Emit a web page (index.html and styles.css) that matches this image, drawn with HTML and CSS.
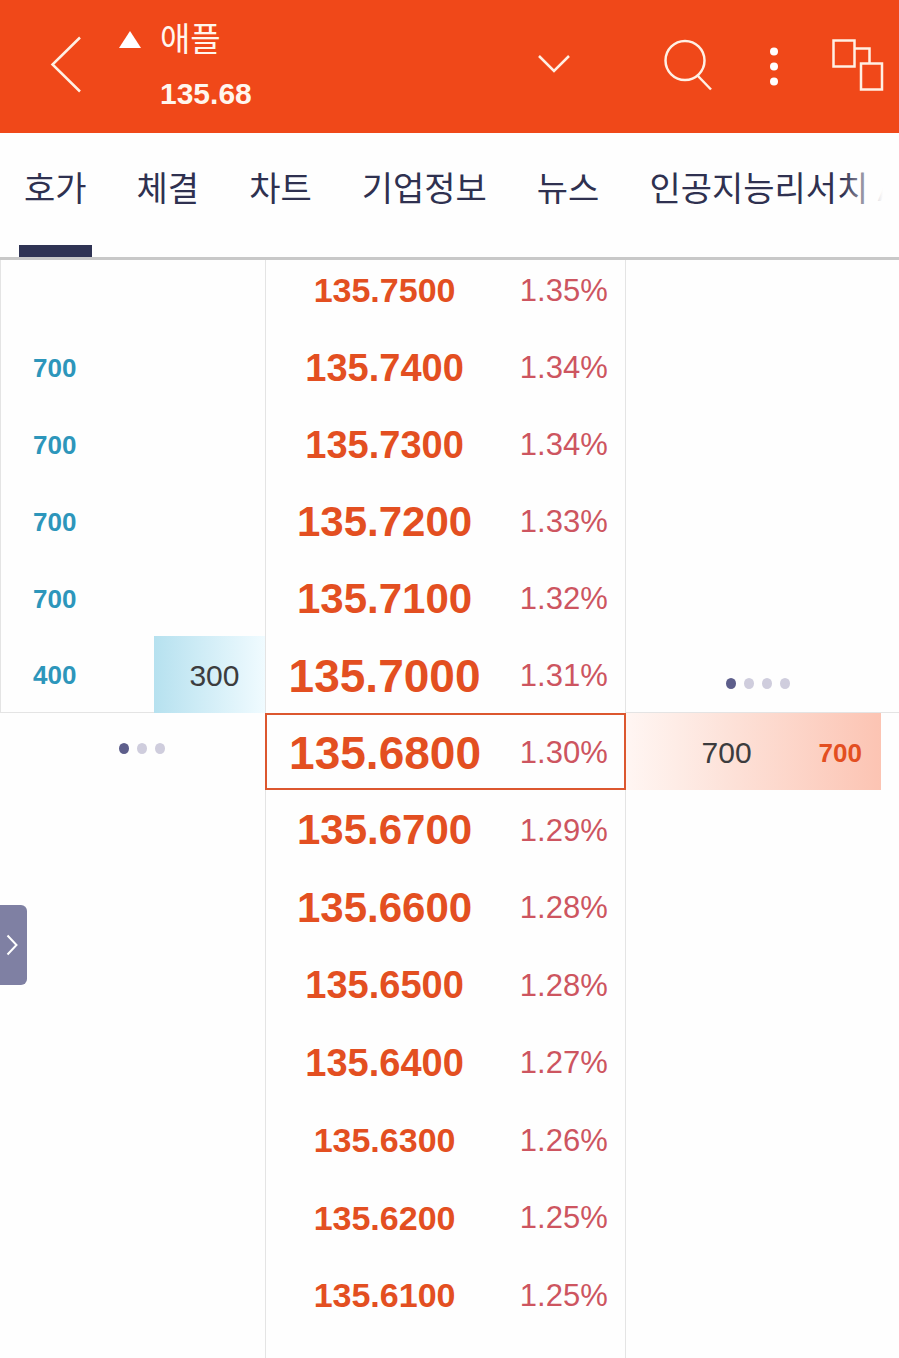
FILE: index.html
```html
<!DOCTYPE html>
<html lang="ko">
<head>
<meta charset="utf-8">
<meta name="viewport" content="width=device-width, initial-scale=1">
<title>애플 호가</title>
<link rel="stylesheet" href="styles.css">
</head>
<body>
<header class="topbar">
  <button class="icon-btn" type="button" aria-label="뒤로">
    <svg width="32" height="58" viewBox="0 0 32 58"><path d="M30 1.500 2.500 28.500 30 55.500"/></svg>
  </button>
  <div class="stock">
    <svg class="up" width="22" height="17" viewBox="0 0 22 17" aria-hidden="true"><path d="M11 0 22 17H0z"/></svg>
    <h1 class="stock-name">애플</h1>
    <p class="stock-price">135.68</p>
  </div>
  <div class="actions">
    <button class="icon-btn open-list" type="button" aria-label="종목 목록">
      <svg width="34" height="20" viewBox="0 0 34 20"><path d="M2 1 17 16 32 1"/></svg>
    </button>
    <button class="icon-btn search" type="button" aria-label="검색">
      <svg width="50" height="52" viewBox="0 0 50 52"><circle cx="22" cy="21.500" r="19.500"/><path d="M34 36 48 50.500"/></svg>
    </button>
    <button class="icon-btn more" type="button" aria-label="더보기">
      <svg width="10" height="40" viewBox="0 0 10 40"><g class="solid"><circle cx="5" cy="4.500" r="4"/><circle cx="5" cy="19.500" r="4"/><circle cx="5" cy="34.500" r="4"/></g></svg>
    </button>
    <button class="icon-btn" type="button" aria-label="화면 연결">
      <svg width="52" height="52" viewBox="0 0 52 52"><path d="M1.500 1.500h21v26h-21zM29 24.500h21v26h-21zM22.500 9.500H37.500v15"/></svg>
    </button>
  </div>
</header>
<nav class="tabs">
  <a class="tab active" href="#quote" aria-current="page">호가</a>
  <a class="tab" href="#trades">체결</a>
  <a class="tab" href="#chart">차트</a>
  <a class="tab" href="#company">기업정보</a>
  <a class="tab" href="#news">뉴스</a>
  <a class="tab" href="#research">인공지능리서치 A</a>
</nav>
<main class="book" id="quote">
  <table class="quotes" aria-label="호가">
    <colgroup><col class="c-total"><col class="c-change"><col class="c-price"><col class="c-rate"><col class="c-bid"></colgroup>
    <tbody class="asks">
      <tr><td class="total"></td><td></td><td class="price s1">135.7500</td><td class="rate">1.35%</td><td></td></tr>
      <tr><td class="total">700</td><td></td><td class="price s2">135.7400</td><td class="rate">1.34%</td><td></td></tr>
      <tr><td class="total">700</td><td></td><td class="price s2">135.7300</td><td class="rate">1.34%</td><td></td></tr>
      <tr><td class="total">700</td><td></td><td class="price s3">135.7200</td><td class="rate">1.33%</td><td></td></tr>
      <tr><td class="total">700</td><td></td><td class="price s3">135.7100</td><td class="rate">1.32%</td><td></td></tr>
      <tr><td class="total">400</td><td class="ask-bar">300</td><td class="price s4">135.7000</td><td class="rate">1.31%</td>
        <td class="pager-right"><div class="dots"><i class="on"></i><i></i><i></i><i></i></div></td></tr>
    </tbody>
    <tbody class="bids">
      <tr class="current"><td class="pager-left" colspan="2"><div class="dots"><i class="on"></i><i></i><i></i></div></td><td class="price s4">135.6800</td><td class="rate">1.30%</td>
        <td class="bid"><div class="bid-bar"><span class="qty">700</span><b class="sum">700</b></div></td></tr>
      <tr><td colspan="2"></td><td class="price s3">135.6700</td><td class="rate">1.29%</td><td></td></tr>
      <tr><td colspan="2"></td><td class="price s3">135.6600</td><td class="rate">1.28%</td><td></td></tr>
      <tr><td colspan="2"></td><td class="price s2">135.6500</td><td class="rate">1.28%</td><td></td></tr>
      <tr><td colspan="2"></td><td class="price s2">135.6400</td><td class="rate">1.27%</td><td></td></tr>
      <tr><td colspan="2"></td><td class="price s1">135.6300</td><td class="rate">1.26%</td><td></td></tr>
      <tr><td colspan="2"></td><td class="price s1">135.6200</td><td class="rate">1.25%</td><td></td></tr>
      <tr><td colspan="2"></td><td class="price s1">135.6100</td><td class="rate">1.25%</td><td></td></tr>
      <tr><td colspan="2"></td><td class="price"></td><td class="rate"></td><td></td></tr>
    </tbody>
  </table>
</main>
<button class="drawer" type="button" aria-label="패널 열기">
  <svg width="12" height="22" viewBox="0 0 12 22"><path d="M1.500 1.500 10.500 11 1.500 20.500"/></svg>
</button>
</body>
</html>
```
FILE: styles.css
```css
* { box-sizing: border-box; }

body {
  margin: 0;
  height: 100vh;
  display: flex;
  flex-direction: column;
  overflow: hidden;
  background: #fefefe;
  font-family: "Liberation Sans", "Noto Sans CJK KR", sans-serif;
  color: #3c3c3e;
}

button {
  border: 0;
  padding: 0;
  background: none;
  cursor: pointer;
}

svg {
  display: block;
  fill: none;
  stroke: #fff0e4;
  stroke-width: 2.5;
}

/* Header */
.topbar {
  flex: none;
  display: flex;
  align-items: center;
  height: 133px;
  padding: 0 15px 4px 50px;
  background: #f04819;
  color: #fff6ee;
}

.stock {
  display: grid;
  grid-template-columns: 22px auto;
  column-gap: 19px;
  row-gap: 6px;
  align-items: center;
  margin-left: 37px;
  padding-top: 4px;
}

.up { fill: #fff; stroke: none; }

.stock-name,
.stock-price {
  margin: 0;
  line-height: 48px;
}

.stock-name {
  font-size: 33px;
  font-weight: 400;
}

.stock-price {
  grid-column: 2;
  font-size: 30px;
  font-weight: 700;
}

.actions {
  display: flex;
  align-items: center;
  margin-left: auto;
}

.open-list { margin-right: 92px; }
.search { margin-right: 56px; }
.more { margin-right: 53px; }
.more svg { margin-top: 4px; }
.solid { fill: #fff; stroke: none; }

/* Tabs */
.tabs {
  flex: none;
  display: flex;
  gap: 40px;
  height: 127px;
  padding-left: 19px;
  border-bottom: 3px solid #c8c8c8;
  overflow: hidden;
  position: relative;
}

.tabs::after {
  content: "";
  position: absolute;
  top: 0;
  right: 0;
  bottom: 0;
  width: 56px;
  background: linear-gradient(to right, #fefefe00, #fefefe 40px);
}

.tab {
  flex: none;
  padding: 0 5px;
  border-bottom: 12px solid transparent;
  font-size: 34px;
  line-height: 112px;
  color: #2f3150;
  text-decoration: none;
  white-space: nowrap;
}

.active { border-color: #2f3354; }

/* Order book */
.book {
  flex: 1;
  min-height: 0;
  overflow: hidden;
}

.quotes {
  width: 100%;
  table-layout: fixed;
  border-collapse: separate;
  border-spacing: 0;
}

.c-total { width: 17.1%; }
.c-change { width: 12.4%; }
.c-price { width: 27%; }
.c-rate { width: 13.1%; }
.c-bid { width: 30.4%; }

.quotes td {
  height: 77px;
  padding: 2px 0 0;
  vertical-align: middle;
  line-height: 1;
}

.bids tr:nth-child(even) td { height: 78px; }

.quotes .total {
  padding-left: 32px;
  border-left: 1px solid #e4e4e4;
  font-size: 26px;
  font-weight: 700;
  color: #2d96bb;
}

.asks tr:last-child td { border-bottom: 1px solid #e4e4e4; }

.quotes .price {
  padding-right: 5px;
  border-left: 1px solid #e4e4e4;
  text-align: center;
  font-weight: 700;
  color: #e34f21;
}

.s1 { font-size: 34px; }
.s2 { font-size: 38px; }
.s3 { font-size: 42px; }
.s4 { font-size: 46px; }

.quotes .rate {
  padding-right: 5px;
  border-right: 1px solid #e4e4e4;
  text-align: center;
  font-size: 31px;
  color: #cd5560;
}

.quotes .asks tr:first-child td {
  height: 68px;
  padding-top: 0;
  padding-bottom: 8px;
}

.asks tr:last-child .price,
.asks tr:last-child .rate,
.asks tr:last-child .ask-bar { border-bottom: 0; }

.quotes .ask-bar {
  padding-left: 10px;
  background: linear-gradient(to right, #b6e1ef, #f0fbff);
  text-align: center;
  font-size: 30px;
}

.current .price,
.current .rate {
  border-top: 2px solid #dc572f;
  border-bottom: 2px solid #dc572f;
}

.quotes .current .price { border-left: 2px solid #dc572f; }

.quotes .current .rate {
  padding-right: 4px;
  border-right: 2px solid #dc572f;
}

.quotes .bid { padding: 0 18px 0 0; }

.bid-bar {
  display: flex;
  align-items: center;
  justify-content: flex-end;
  gap: 67px;
  height: 77px;
  padding: 2px 19px 0 0;
  background: linear-gradient(to right, #fff6f3, #fde2d9 40%, #fcc4b3);
}

.qty { font-size: 30px; }

.sum {
  font-size: 26px;
  color: #e34f21;
}

.dots {
  display: flex;
  justify-content: center;
  gap: 8px;
}

.dots i {
  width: 10px;
  height: 11px;
  border-radius: 50%;
  background: #cfcddd;
}

.dots .on { background: #5d5e8b; }

.quotes .pager-left { padding: 0 0 6px 18px; }
.quotes .pager-right { padding: 18px 8px 0 0; }

/* Side panel handle */
.drawer {
  position: fixed;
  left: 0;
  top: 905px;
  display: flex;
  align-items: center;
  width: 27px;
  height: 80px;
  padding-left: 6px;
  border-radius: 0 6px 6px 0;
  background: #7f80a3;
}

.drawer svg {
  stroke: #fff;
  stroke-width: 2;
}
```
